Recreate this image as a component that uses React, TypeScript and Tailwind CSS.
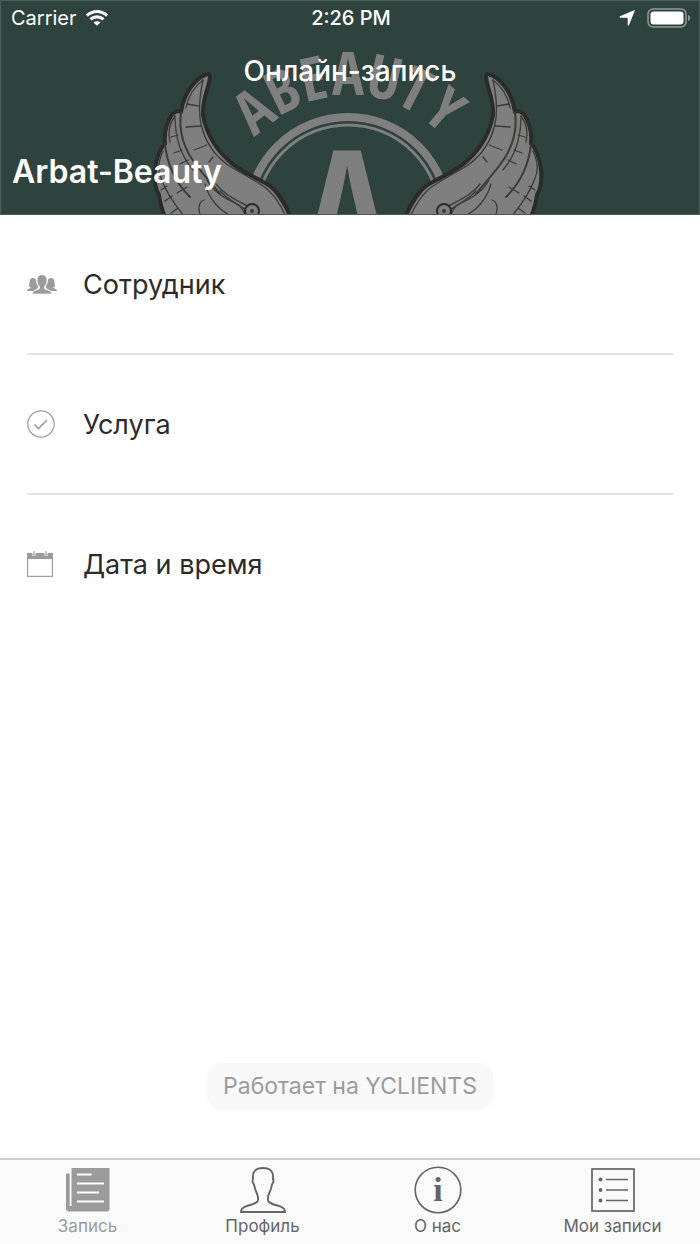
import type { ReactNode } from "react";

const ringLetters = [
  { char: "A", x: 253, y: 110, angle: -38 },
  { char: "B", x: 282, y: 90, angle: -26 },
  { char: "E", x: 313, y: 78, angle: -12 },
  { char: "A", x: 348, y: 73, angle: 0 },
  { char: "U", x: 385, y: 77, angle: 13 },
  { char: "T", x: 416, y: 89, angle: 27 },
  { char: "Y", x: 446, y: 109, angle: 40 },
];

function Wing() {
  return (
    <g strokeLinecap="round" strokeLinejoin="round">
      <path
        d="M208 74C196 77 184 92 181 112C179 110 174 111 171 116C166 124 164 134 165 144C161 147 156 157 155 170C154 180 155 188 159 195C160 203 162 210 166 220H292C286 206 280 194 270 186C258 178 240 172 228 160C214 147 206 132 203 115C202 98 209 89 210 77C210 75 209 74 208 74Z"
        fill="#7f7f7f"
        stroke="#292c2b"
        strokeWidth="4"
      />
      <g fill="none" stroke="#3b3b39" strokeWidth="1.3">
        <path d="M203 80C200 94 198 110 201 124C205 142 214 155 228 165C243 175 258 181 268 190C277 198 282 208 286 217" />
        <path d="M203 80C194 87 188 97 186 108" />
        <path d="M181 112C178 134 185 151 197 166C206 178 214 186 220 194" strokeWidth="2" />
        <path d="M175 116C175 137 181 156 193 170" />
        <path d="M175 116C169 124 168 134 170 142" />
        <path d="M165 144C167 164 176 183 190 197" strokeWidth="2" />
        <path d="M163 151C158 162 158 172 161 178C165 190 174 204 185 217" />
        <path d="M187 104L199 106M186 127L201 126M194 150L207 145M209 162L213 157" />
        <path d="M171 137L178 135M174 153L182 150M180 164L188 160M177 193L187 187" />
        <path d="M161 190L167 186M165 201L172 196M171 213L178 208" />
        <path d="M207 180C213 192 226 199 235 203C242 206 244 212 246 217" />
        <path d="M216 184C225 196 239 201 249 207" />
        <path d="M220 191C228 200 240 205 247 211" />
        <path d="M205 184C209 198 217 208 229 215" />
        <path d="M204 200C198 202 198 210 201 217" />
      </g>
      <circle cx="252" cy="211" r="7" fill="#7f7f7f" stroke="#292c2b" strokeWidth="2" />
      <circle cx="252" cy="211" r="2" fill="#3b3b39" />
    </g>
  );
}

function Emblem() {
  return (
    <svg viewBox="150 0 400 215" className="h-full w-[400px] shrink-0" aria-hidden="true">
      <circle cx="348" cy="217" r="100" fill="none" stroke="#7f7f7f" strokeWidth="8" />
      <circle cx="348" cy="217" r="92" fill="none" stroke="#7f7f7f" strokeWidth="3" />
      <g
        fill="#7f7f7f"
        textAnchor="middle"
        className="font-['Open_Sans_Condensed','Roboto_Condensed',sans-serif] font-bold"
      >
        {ringLetters.map(({ char, x, y, angle }, i) => (
          <text key={i} fontSize="60" y="22" transform={`translate(${x} ${y}) rotate(${angle})`}>
            {char}
          </text>
        ))}
        <text x="347" y="259" fontSize="152">
          A
        </text>
      </g>
      <Wing />
      <g transform="translate(696 0) scale(-1 1)">
        <Wing />
      </g>
    </svg>
  );
}

function StatusBar() {
  return (
    <div className="grid h-[34px] grid-cols-3 items-center pr-2 pl-[10px] text-[20px] leading-6">
      <div className="flex items-center gap-2">
        <span>Carrier</span>
        <svg width="24" height="18" viewBox="0 0 26 18" fill="none" stroke="white" strokeWidth="3.4">
          <path d="M2 6.5C8.5 .5 17.5 .5 24 6.5" />
          <path d="M6 10.5C10 6.8 16 6.8 20 10.5" />
          <path d="M13 17.5L9.3 13.8C11.3 12 14.7 12 16.7 13.8Z" fill="white" stroke="none" />
        </svg>
      </div>
      <span className="text-center font-medium">2:26 PM</span>
      <div className="flex items-center justify-end gap-3">
        <svg width="16" height="16" viewBox="0 0 16 16" fill="white">
          <path d="M15 .3Q16 0 15.7 1L10 15Q9.300 16 8.700 15V8.200Q8.700 7.700 8 7.700H1Q0 7 1 6.200Z" />
        </svg>
        <svg width="44" height="20" viewBox="0 0 44 20" fill="none">
          <rect x="1" y="1" width="38" height="18" rx="5" stroke="#8f9b98" strokeWidth="1.5" />
          <rect x="3.5" y="3.5" width="33" height="13" rx="3" fill="white" />
          <path d="M41 7V13C44 12 44 8 41 7Z" fill="#8f9b98" />
        </svg>
      </div>
    </div>
  );
}

function StaffIcon() {
  return (
    <svg width="30" height="20" viewBox="0 0 30 20" fill="#9b9b9b">
      <path d="M0 17C0 14.5 3 15 4 13.5C2.5 13 2 12.5 2 12C3 9 1.5 4 6 4C8 4 9 5 9.3 7C9 8 9.5 9 10 10C11 12 11.5 13 10.5 14.5L6 17Z" />
      <path d="M30 17C30 14.5 27 15 26 13.5C27.5 13 28 12.5 28 12C27 9 28.5 4 24 4C22 4 21 5 20.7 7C21 8 20.5 9 20 10C19 12 18.5 13 19.5 14.5L24 17Z" />
      <path
        d="M5.5 20C5.5 16 9.5 16.5 12.5 14.7V12.5C11 11 10.5 9.5 10.2 8C9.8 3 11.5 .8 15 .8C18.5 .8 20.2 3 19.8 8C19.5 9.5 19 11 17.5 12.5V14.7C20.5 16.5 24.5 16 24.5 20Z"
        stroke="white"
        strokeWidth=".6"
      />
    </svg>
  );
}

function ServiceIcon() {
  return (
    <svg width="28" height="28" viewBox="0 0 28 28" fill="none" stroke="#a0a0a0">
      <circle cx="14" cy="14" r="13.2" strokeWidth="1.3" />
      <path d="M7.5 14.5L11.5 18.5L20 10" strokeWidth="1.7" />
    </svg>
  );
}

function DateIcon() {
  return (
    <svg width="26" height="26" viewBox="0 0 26 26" fill="none">
      <rect x=".6" y="2.6" width="24.8" height="22.8" stroke="#a0a0a0" strokeWidth="1.2" />
      <rect x="0" y="2" width="26" height="6" fill="#9b9b9b" />
      <path d="M7 0V5M19 0V5" stroke="white" strokeWidth="3" />
      <path d="M7 0V5M19 0V5" stroke="#9b9b9b" strokeWidth="1.2" />
    </svg>
  );
}

function RecordIcon() {
  return (
    <svg width="44" height="44" viewBox="0 0 44 44" fill="#9b9b9b">
      <path d="M5.5 0H43.5V41Q43.5 43.5 41 43.5H3Q0 43.5 0 40.5V5.500H3.7V38H5.5Z" />
      <path d="M11 6.5H25.5M11 15.5H38M11 24.5H33M11 33.5H38" stroke="white" strokeWidth="1.8" />
    </svg>
  );
}

function ProfileIcon() {
  return (
    <svg width="46" height="46" viewBox="0 0 46 46" fill="none" stroke="#646468" strokeWidth="1.9">
      <path d="M1 45C1 37.5 13 39.5 17.5 34.5C19 31 18 28.5 16.5 25.5C15 22.5 14.5 20 14 17.5C12 15 12.5 13 13 12C12 4.5 16 1 23 1C30 1 34 4.5 33 12C33.5 13 34 15 32 17.5C31.5 20 31 22.5 29.5 25.5C28 28.5 27 31 28.5 34.5C33 39.5 45 37.5 45 45Z" />
    </svg>
  );
}

function AboutIcon() {
  return (
    <svg width="48" height="48" viewBox="0 0 48 48" fill="none">
      <circle cx="24" cy="24" r="22.8" stroke="#646468" strokeWidth="1.6" />
      <text
        x="24"
        y="35"
        fontSize="34"
        textAnchor="middle"
        fill="#646468"
        className="font-['Liberation_Serif',serif] font-bold"
      >
        i
      </text>
    </svg>
  );
}

function ListIcon() {
  return (
    <svg width="44" height="44" viewBox="0 0 44 44" fill="none" stroke="#646468" strokeWidth="1.7">
      <rect x="1" y="1" width="42" height="42" />
      <path d="M15 11.5H37M15 22H37M15 32.5H37" />
      <g fill="#646468" stroke="none">
        <circle cx="9.5" cy="11.5" r="1.9" />
        <circle cx="9.5" cy="22" r="1.9" />
        <circle cx="9.5" cy="32.5" r="1.9" />
      </g>
    </svg>
  );
}

function BookingRow({ icon, label }: { icon: ReactNode; label: string }) {
  return (
    <li className="border-b-2 border-[#e2e2e2] last:border-b-0">
      <button type="button" className="flex h-[138px] w-full items-center text-left">
        <span className="w-14 shrink-0">{icon}</span>
        <span className="pt-[2px] text-[27px] leading-8 text-[#2b2b2b]">{label}</span>
      </button>
    </li>
  );
}

const tabs = [
  { label: "Запись", icon: <RecordIcon />, active: true },
  { label: "Профиль", icon: <ProfileIcon />, active: false },
  { label: "О нас", icon: <AboutIcon />, active: false },
  { label: "Мои записи", icon: <ListIcon />, active: false },
];

export default function App() {
  return (
    <div className="flex min-h-screen flex-col bg-white font-['Inter',sans-serif]">
      <header className="relative bg-[#2f433e] text-white">
        <div className="absolute inset-0 flex justify-center overflow-hidden">
          <Emblem />
        </div>
        <div className="relative flex h-[215px] flex-col border border-[#4b5d58]">
          <StatusBar />
          <h1 className="mt-5 text-center text-[28px] leading-8 font-medium">Онлайн-запись</h1>
          <p className="mt-auto px-[11px] pb-[22px] text-[32px] leading-10 font-semibold">
            Arbat-Beauty
          </p>
        </div>
      </header>

      <main className="flex flex-1 flex-col">
        <ul className="px-[27px]">
          <BookingRow icon={<StaffIcon />} label="Сотрудник" />
          <BookingRow icon={<ServiceIcon />} label="Услуга" />
          <BookingRow icon={<DateIcon />} label="Дата и время" />
        </ul>
        <a
          href="#"
          className="mx-auto mt-auto mb-12 rounded-[14px] bg-[#f9f9f9] px-4 py-2 text-[23px] leading-[31px] text-[#9b9b9b]"
        >
          Работает на YCLIENTS
        </a>
      </main>

      <nav className="grid grid-cols-4 border-t-2 border-[#d0d0d3] bg-[#fafafa] pt-1 pb-2">
        {tabs.map(({ label, icon, active }) => (
          <button
            key={label}
            type="button"
            className={
              active
                ? "flex flex-col items-center text-[#9b9b9b]"
                : "flex flex-col items-center text-[#646468]"
            }
          >
            <span className="flex h-[52px] items-center">{icon}</span>
            <span className="text-[17px] leading-5">{label}</span>
          </button>
        ))}
      </nav>
    </div>
  );
}
